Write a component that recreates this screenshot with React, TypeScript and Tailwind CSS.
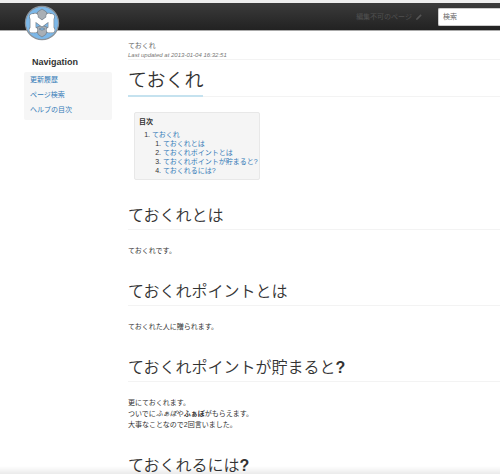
const navigation = [
  { label: '更新履歴', href: '#recent' },
  { label: 'ページ検索', href: '#search' },
  { label: 'ヘルプの目次', href: '#help' },
]

const contents = [
  { label: 'ておくれとは', href: '#about' },
  { label: 'ておくれポイントとは', href: '#point' },
  { label: 'ておくれポイントが貯まると?', href: '#reward' },
  { label: 'ておくれるには?', href: '#how' },
]

// one bone: a thick shaft with two round knobs at each end
const bones = 'M9 12v12M27 12v12M10 12.500l8 6l8-6'
const knobs = [
  [8.4, 11.6],
  [11.2, 11],
  [27.6, 11.6],
  [24.8, 11],
  [8, 25],
  [10.8, 25],
  [28, 25],
  [25.2, 25],
]

function Logo() {
  return (
    <svg viewBox="0 0 36 36" className="w-9 h-9" aria-hidden="true">
      <circle cx="18" cy="18" r="16.6" fill="#7db8e8" stroke="#8b9299" strokeWidth="1.2" />
      <path d="M18 4l4.500 3 1 3 2 1.500L18 16l-7.500-4.500 2-1.500 1-3z" fill="#a9afb5" stroke="#75818c" strokeWidth=".8" />
      <path d="M18 32l-3.800-2.500-1-3-2-1.500 2-3 4.800-1.500 4.800 1.500 2 3-2 1.500-1 3z" fill="#a9afb5" stroke="#75818c" strokeWidth=".8" />
      <g fill="#75818c">
        <path d={bones} fill="none" stroke="#75818c" strokeWidth="6.400" strokeLinejoin="round" />
        {knobs.map(([x, y]) => (
          <circle key={`${x}-${y}`} cx={x} cy={y} r="3.2" />
        ))}
      </g>
      <g fill="#fff">
        <path d={bones} fill="none" stroke="#fff" strokeWidth="5.200" strokeLinejoin="round" />
        {knobs.map(([x, y]) => (
          <circle key={`${x}-${y}`} cx={x} cy={y} r="2.6" />
        ))}
      </g>
      <path d="M15 24q3-2.500 6 0q-3 2.500-6 0z" fill="#7db8e8" stroke="#75818c" strokeWidth=".7" />
    </svg>
  )
}

function Heading({ id, children }: { id: string; children: React.ReactNode }) {
  return (
    <h2 id={id} className="h-[27px] border-b border-[#f3f3f3] text-[16px] leading-[26px] font-[350] text-[#333]">
      {children}
    </h2>
  )
}

export default function App() {
  return (
    <div className="min-h-screen bg-white text-[7px] leading-[11px] text-[#333] font-['Liberation_Sans','Noto_Sans_CJK_JP',sans-serif]" lang="ja">
      <header className="h-[31px] flex items-center gap-4 pl-6 border-t-3 border-t-[#eeeeee] border-b border-b-[#aaa] bg-linear-to-b from-[#3b3b3b] to-[#222]">
        <a href="#top" aria-label="Home" className="relative top-1.5">
          <Logo />
        </a>
        <button type="button" disabled className="ml-auto flex items-center gap-1 text-[#505050]">
          編集不可のページ
          <svg viewBox="0 0 8 8" className="w-[6px] h-[6px]" aria-hidden="true">
            <path d="M0 8l.7-2.300L6 .4 7.600 2 2.300 7.300z" fill="#555" />
          </svg>
        </button>
        <input
          type="search"
          aria-label="検索"
          placeholder="検索"
          className="w-[62px] h-[18px] px-1 rounded-l-[2px] border border-r-0 border-[#ccc] bg-white placeholder:text-[#666]"
        />
      </header>

      <div className="flex gap-4 pl-6">
        <nav className="w-[88px] shrink-0 pt-6">
          <h2 className="pl-2 mb-[3px] text-[9px] leading-[14px] font-bold text-[#333]">Navigation</h2>
          <ul className="rounded-[2px] bg-[#f6f6f6] px-1.5 pb-[3px]">
            {navigation.map((item) => (
              <li key={item.href} className="leading-[15px]">
                <a href={item.href} className="text-[#337ab7]">{item.label}</a>
              </li>
            ))}
          </ul>
        </nav>

        <main className="flex-1 min-w-0 pt-[9px]">
          <div className="border-b border-[#f3f3f3]">
            <p className="text-[#666]">ておくれ</p>
            <p className="text-[6px] leading-[8px] italic text-[#777]">Last updated at 2013-01-04 16:32:51</p>
          </div>

          <h1 id="top" className="h-[37px] flex border-b border-[#f3f3f3] text-[19px] leading-[41px] text-[#333]">
            <span className="h-[37px] border-b-2 border-[#c5e2ef] font-[350]">ておくれ</span>
          </h1>

          <div className="w-[126px] ml-1.5 mt-[15px] px-1 pt-1 pb-1 rounded-[2px] border border-[#e8e8e8] bg-[#f5f5f5] leading-[9px]">
            <p className="mb-[3px] font-bold leading-[10px]">目次</p>
            <ol className="list-decimal pl-[13px]">
              <li>
                <a href="#top" className="text-[#337ab7]">ておくれ</a>
                <ol className="list-decimal pl-[11px]">
                  {contents.map((item) => (
                    <li key={item.href} className="whitespace-nowrap">
                      <a href={item.href} className="text-[#337ab7]">{item.label}</a>
                    </li>
                  ))}
                </ol>
              </li>
            </ol>
          </div>

          <section className="pt-[23px]">
            <Heading id="about">ておくれとは</Heading>
            <p className="mt-[15px]">ておくれです。</p>
          </section>
          <section className="pt-[23px]">
            <Heading id="point">ておくれポイントとは</Heading>
            <p className="mt-[15px]">ておくれた人に贈られます。</p>
          </section>
          <section className="pt-[23px]">
            <Heading id="reward">
              ておくれポイントが貯まると<span className="font-bold">?</span>
            </Heading>
            <p className="mt-[15px]">
              更にておくれます。<br />
              ついでに<em>ふぁぼ</em>や<strong>ふぁぼ</strong>がもらえます。<br />
              大事なことなので2回言いました。
            </p>
          </section>
          <section className="pt-[23px]">
            <Heading id="how">
              ておくれるには<span className="font-bold">?</span>
            </Heading>
          </section>
        </main>
      </div>

      <div className="fixed inset-x-0 bottom-0 h-2 bg-linear-to-b from-transparent to-black/8 pointer-events-none" />
    </div>
  )
}
